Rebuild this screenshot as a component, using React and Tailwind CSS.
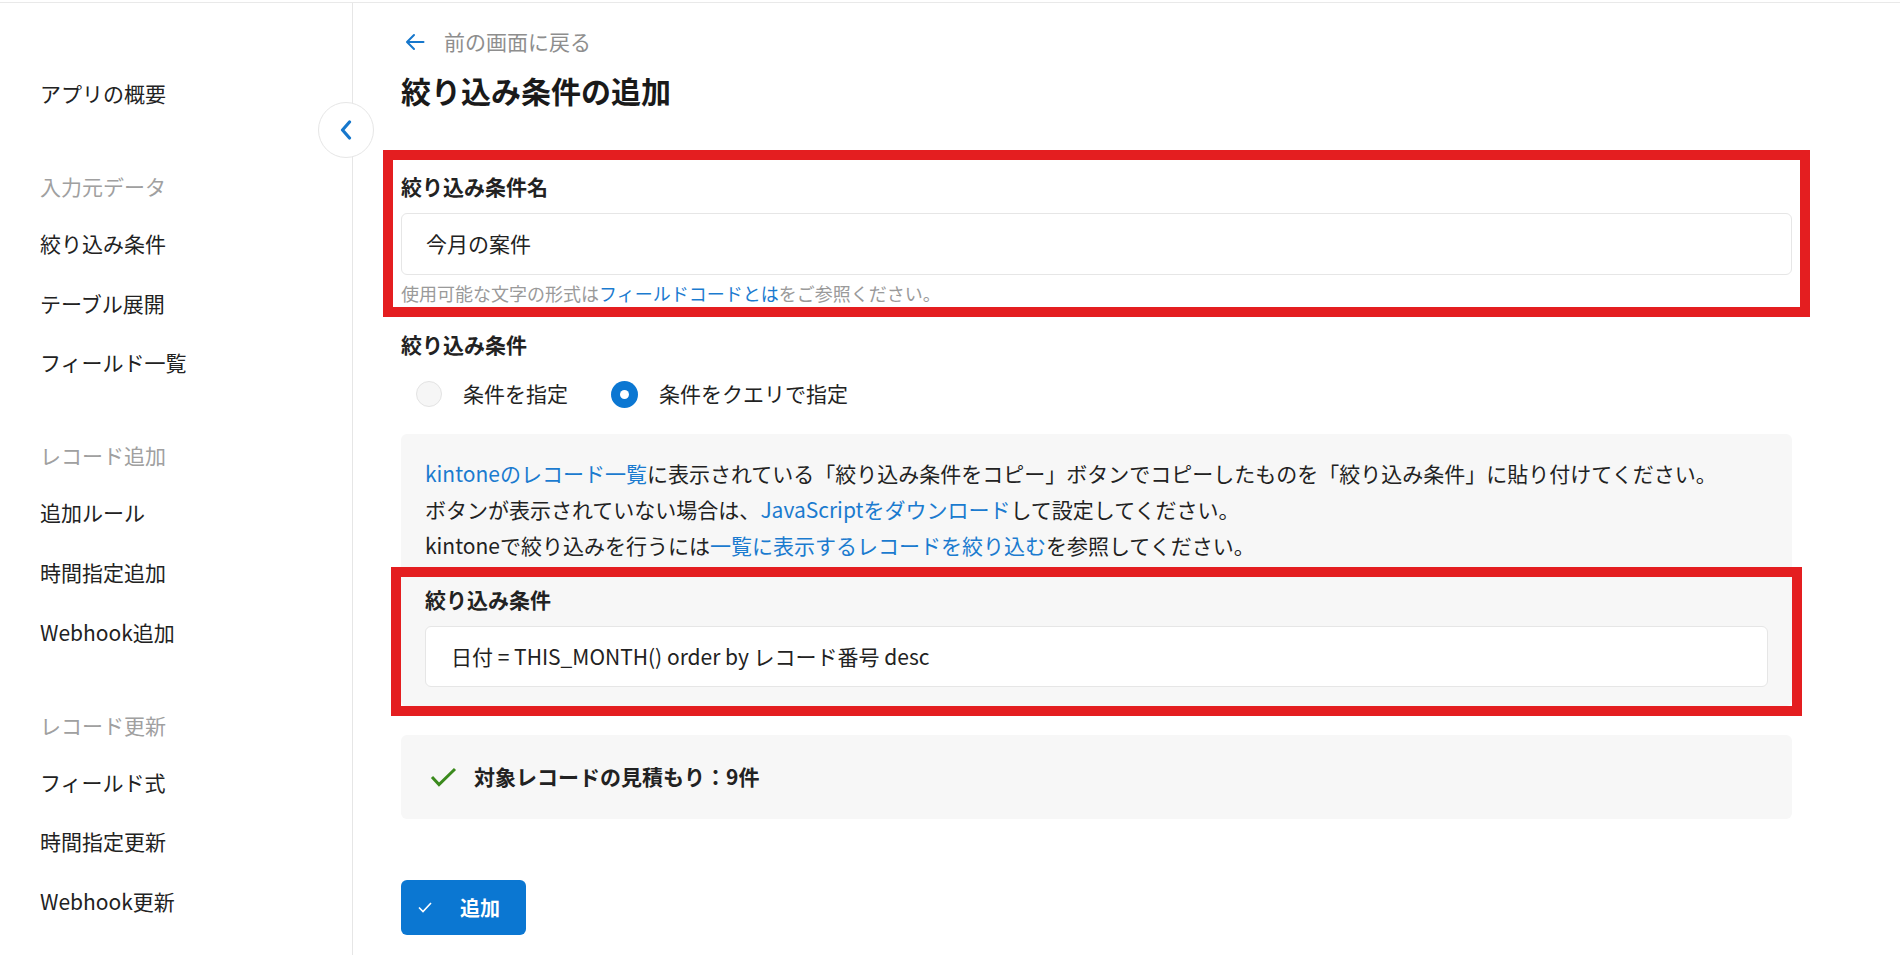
const FONT = "font-['Noto_Sans_CJK_JP',sans-serif]";

const NAV_GROUPS = [
  { title: "入力元データ", items: ["絞り込み条件", "テーブル展開", "フィールド一覧"] },
  { title: "レコード追加", items: ["追加ルール", "時間指定追加", "Webhook追加"] },
  { title: "レコード更新", items: ["フィールド式", "時間指定更新", "Webhook更新"] },
];

function Sidebar() {
  return (
    <aside className="relative w-[353px] shrink-0 border-r border-[#e6e6e6] pl-[40px] pt-[75px] text-[21px] leading-[30px] text-[#222]">
      <div>アプリの概要</div>
      {NAV_GROUPS.map(g => (
        <div key={g.title} className="mt-[63px] flex flex-col gap-[29.8px]">
          <div className="-mb-[3px] text-[#a0a0a0]">{g.title}</div>
          {g.items.map(item => (
            <div key={item}>{item}</div>
          ))}
        </div>
      ))}

      {/* collapse toggle sits on the border */}
      <button className="absolute top-[99px] -right-[22px] flex h-[56px] w-[56px] items-center justify-center rounded-full border border-[#e6e6e6] bg-white">
        <svg width="12" height="20" viewBox="0 0 12 20" className="-ml-[1px]">
          <polyline points="9.5,2 2.5,10 9.5,18" fill="none" stroke="#1677cc" strokeWidth="3.2" strokeLinecap="round" strokeLinejoin="round" />
        </svg>
      </button>
    </aside>
  );
}

function Link({ children }) {
  return <span className="text-[#1b7bcf]">{children}</span>;
}

export default function App() {
  return (
    <div className={`${FONT} min-h-screen bg-white pt-[2px]`}>
      <div className="flex min-h-[953px] border-t border-[#e9e9e9]">
        <Sidebar />

        <main className="flex-1 pl-[48px] pr-[108px] pt-[24px] text-[#222]">
          {/* Back link */}
          <div className="flex h-[30px] items-center">
            <svg width="20" height="18" viewBox="0 0 20 18" className="ml-[4px]">
              <path d="M18.5 9H2.5M9 2L2 9l7 7" fill="none" stroke="#1677cc" strokeWidth="2" strokeLinecap="round" strokeLinejoin="round" />
            </svg>
            <span className="ml-[19px] text-[21px] text-[#8e8e8e]">前の画面に戻る</span>
          </div>

          <h1 className="mt-[13px] text-[30px] font-bold leading-[40px] text-[#1a1a1a]">絞り込み条件の追加</h1>

          {/* Filter name */}
          <div className="mt-[50px] -mx-[8px] px-[8px] pt-[11px] pb-[1px] outline-solid outline-[10px] outline-[#e41e20]">
            <div className="text-[21px] font-bold leading-[30px]">絞り込み条件名</div>
            <div className="mt-[12px] flex h-[62px] items-center rounded-[6px] border border-[#e6e6e6] bg-white px-[24px] text-[21px]">
              今月の案件
            </div>
            <p className="mt-[5px] text-[18px] leading-[26px] text-[#9a9a9a]">
              使用可能な文字の形式は<Link>フィールドコードとは</Link>をご参照ください。
            </p>
          </div>

          {/* Condition type */}
          <div className="mt-[22px] text-[21px] font-bold leading-[30px]">絞り込み条件</div>
          <div className="mt-[20px] flex h-[30px] items-center pl-[15px] text-[21px]">
            <span className="h-[26px] w-[26px] rounded-full border border-[#e3e3e3] bg-[#f6f6f6]" />
            <span className="ml-[21px]">条件を指定</span>
            <span className="ml-[43px] flex h-[27px] w-[27px] items-center justify-center rounded-full bg-[#0b77d2]">
              <span className="h-[9px] w-[9px] rounded-full bg-white" />
            </span>
            <span className="ml-[21px]">条件をクエリで指定</span>
          </div>

          <div className="mt-[25px] rounded-[6px] bg-[#f7f7f7]">
            <div className="px-[24px] pt-[21px] text-[21px] leading-[36px]">
              <p><Link>kintoneのレコード一覧</Link>に表示されている「絞り込み条件をコピー」ボタンでコピーしたものを「絞り込み条件」に貼り付けてください。</p>
              <p>ボタンが表示されていない場合は、<Link>JavaScriptをダウンロード</Link>して設定してください。</p>
              <p>kintoneで絞り込みを行うには<Link>一覧に表示するレコードを絞り込む</Link>を参照してください。</p>
            </div>
            <div className="mt-[14px] px-[24px] pt-[7px] pb-[19px] outline-solid outline-[10px] outline-[#e41e20]">
              <div className="text-[21px] font-bold leading-[30px]">絞り込み条件</div>
              <div className="mt-[12px] flex h-[61px] items-center rounded-[6px] border border-[#e6e6e6] bg-white px-[25px] text-[21px]">
                日付 = THIS_MONTH() order by レコード番号 desc
              </div>
            </div>
          </div>

          {/* Estimate */}
          <div className="mt-[29px] flex h-[84px] items-center rounded-[6px] bg-[#f7f7f7] pl-[29px]">
            <svg width="27" height="20" viewBox="0 0 27 20">
              <path d="M2 10l7 7.5L25 2" fill="none" stroke="#3b8a1d" strokeWidth="3" />
            </svg>
            <span className="ml-[17px] text-[21px] font-bold">対象レコードの見積もり：9件</span>
          </div>

          <button className="mt-[61px] flex h-[55px] w-[125px] items-center rounded-[6px] bg-[#0b77d2] pl-[17px] text-white">
            <svg width="14" height="11" viewBox="0 0 14 11">
              <path d="M1 5.5l4 4L13 1" fill="none" stroke="#fff" strokeWidth="1.6" />
            </svg>
            <span className="ml-[28px] text-[20px] font-bold">追加</span>
          </button>
        </main>
      </div>
    </div>
  );
}
